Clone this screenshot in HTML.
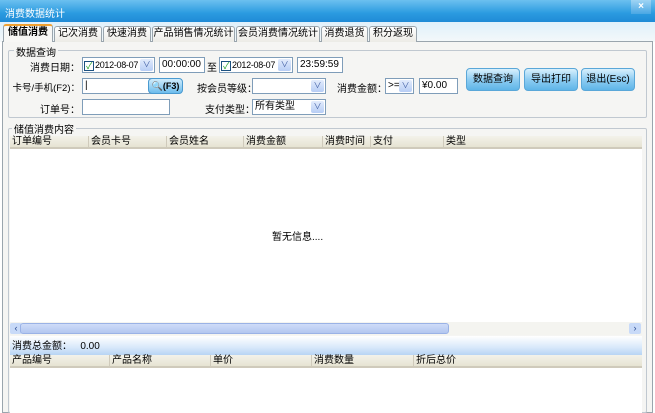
<!DOCTYPE html>
<html><head><meta charset="utf-8"><style>
*{box-sizing:border-box;margin:0;padding:0;white-space:nowrap}
body{width:655px;height:413px;overflow:hidden;background:#fff;font:10px "Liberation Sans","Noto Sans CJK SC",sans-serif;color:#000;position:relative}
.a{position:absolute}
.title{left:0;top:0;width:655px;height:22px;background:linear-gradient(#6cc0f0,#2b9be0 60%,#1f8ad6);color:#fff;padding:5px 5px;font-size:10px}
.x{right:4px;top:0;width:20px;height:14px;background:linear-gradient(#9fd4f4,#4aa7e4);color:#fff;font-weight:bold;text-align:center;font-size:10px;line-height:14px}
.tabbar{left:0;top:22px;width:655px;height:20px;background:linear-gradient(#dff0fb,#f4f8fa)}
.tab{top:26px;height:16px;border:1px solid #9aa5ad;border-bottom:none;border-radius:3px 3px 0 0;background:linear-gradient(#fff,#ecebe6);text-align:center;line-height:14px;font-size:10px;overflow:hidden}
.tab.on{top:24px;height:18px;background:#f7f7f5;font-weight:bold;border-top:2px solid #f0a030}
.panel{left:2px;top:41px;width:651px;height:372px;background:#f5f5f3;border:1px solid #9aa5ad}
.grp{border:1px solid #c0c8d0;border-radius:2px}
.gl{background:#f5f5f3;padding:0 2px;font-size:10px}
.in{background:#fff;border:1px solid #7f9db9;height:16px;font-size:10px;line-height:14px;padding-left:2px;overflow:hidden}
.dd{position:absolute;right:1px;top:1px;width:13px;height:12px;background:linear-gradient(#e3ecfc,#b7cdf5);border-radius:2px;color:#3c5aa0;font-size:8px;text-align:center;line-height:12px}
.cb{display:inline-block;width:10px;height:10px;border:1px solid #1c5180;background:#fff;color:#21a121;font-size:9px;line-height:8px;text-align:center;vertical-align:-1px;margin-right:1px}
.lb{font-size:10px;text-align:right}
.btn{top:68px;height:23px;width:54px;border:1px solid #5aa7d8;border-radius:4px;background:linear-gradient(#d8f0fd,#8fcdf2 50%,#5fb5e8);text-align:center;line-height:21px;font-size:10px}
.hdr{height:13px;background:linear-gradient(#f3f2ea,#e6e3d2);border-bottom:2px solid #cfcabb}
.hdr span{position:absolute;top:0;font-size:10px;line-height:12px;padding-left:2px;border-left:1px solid #cfcabb}
</style></head><body>
<div class="a title">消费数据统计</div>
<div class="a x">×</div>
<div class="a tabbar"></div>
<div class="a panel"></div>
<div class="a tab on" style="left:3px;width:50px">储值消费</div>
<div class="a tab" style="left:54px;width:48px">记次消费</div>
<div class="a tab" style="left:103px;width:48px">快速消费</div>
<div class="a tab" style="left:152px;width:83px">产品销售情况统计</div>
<div class="a tab" style="left:236px;width:84px">会员消费情况统计</div>
<div class="a tab" style="left:321px;width:47px">消费退货</div>
<div class="a tab" style="left:369px;width:48px">积分返现</div>

<div class="a grp" style="left:8px;top:50px;width:639px;height:68px"></div>
<div class="a gl" style="left:14px;top:44px">数据查询</div>
<div class="a lb" style="left:10px;top:59px;width:70px">消费日期：</div>
<div class="a in" style="left:82px;top:57px;width:73px;font-size:9px;letter-spacing:-0.3px;padding-left:1px"><span class="cb">✓</span>2012-08-07<span class="dd">∨</span></div>
<div class="a in" style="left:159px;top:57px;width:46px">00:00:00</div>
<div class="a" style="left:207px;top:59px">至</div>
<div class="a in" style="left:219px;top:57px;width:74px;font-size:9px;letter-spacing:-0.3px;padding-left:1px"><span class="cb">✓</span>2012-08-07<span class="dd">∨</span></div>
<div class="a in" style="left:297px;top:57px;width:46px">23:59:59</div>
<div class="a lb" style="left:4px;top:80px;width:76px;font-size:9.5px">卡号/手机(F2)：</div>
<div class="a in" style="left:82px;top:78px;width:80px">|</div>
<div class="a" style="left:148px;top:78px;width:35px;height:16px;border-radius:4px;border:1px solid #4a9ad0;background:linear-gradient(#d0ecfc,#6cbcec);font-size:9px;font-weight:bold;text-align:center;line-height:14px">🔍(F3)</div>
<div class="a" style="left:197px;top:80px">按会员等级：</div>
<div class="a in" style="left:252px;top:78px;width:74px"><span class="dd">∨</span></div>
<div class="a" style="left:337px;top:80px">消费金额：</div>
<div class="a in" style="left:385px;top:78px;width:29px">&gt;=<span class="dd">∨</span></div>
<div class="a in" style="left:419px;top:78px;width:39px">¥0.00</div>
<div class="a lb" style="left:10px;top:101px;width:70px">订单号：</div>
<div class="a in" style="left:82px;top:99px;width:88px"></div>
<div class="a" style="left:205px;top:101px">支付类型：</div>
<div class="a in" style="left:252px;top:99px;width:74px">所有类型<span class="dd">∨</span></div>
<div class="a btn" style="left:466px">数据查询</div>
<div class="a btn" style="left:524px">导出打印</div>
<div class="a btn" style="left:581px">退出(Esc)</div>

<div class="a grp" style="left:8px;top:128px;width:639px;height:285px"></div>
<div class="a gl" style="left:12px;top:121px">储值消费内容</div>
<div class="a" style="left:10px;top:136px;width:632px;height:186px;background:#fff"></div>
<div class="a hdr" style="left:10px;top:136px;width:632px">
<span style="left:0;border:none">订单编号</span><span style="left:78px">会员卡号</span><span style="left:156px">会员姓名</span><span style="left:233px">消费金额</span><span style="left:312px">消费时间</span><span style="left:360px">支付</span><span style="left:433px">类型</span></div>
<div class="a" style="left:272px;top:228px;font-size:10px">暂无信息....</div>
<div class="a" style="left:10px;top:322px;width:632px;height:13px;background:#f4f4f0"></div>
<div class="a" style="left:10px;top:323px;width:12px;height:11px;background:#c8daf8;border-radius:2px;font-size:9px;text-align:center;line-height:11px;color:#2a4a90">‹</div>
<div class="a" style="left:20px;top:323px;width:429px;height:11px;background:linear-gradient(#cfdcf8,#b2c6f0);border:1px solid #9ab2e6;border-radius:3px"></div>
<div class="a" style="left:629px;top:323px;width:12px;height:11px;background:#c8daf8;border-radius:2px;font-size:9px;text-align:center;line-height:11px;color:#2a4a90">›</div>
<div class="a" style="left:10px;top:336px;width:632px;height:19px;background:linear-gradient(#fff,#d8e8fa 60%,#b8d4f4);font-size:10px;line-height:22px;padding-left:2px">消费总金额：&nbsp;&nbsp;&nbsp;0.00</div>
<div class="a" style="left:10px;top:355px;width:632px;height:58px;background:#fff"></div>
<div class="a hdr" style="left:10px;top:355px;width:632px">
<span style="left:0;border:none">产品编号</span><span style="left:99px">产品名称</span><span style="left:200px">单价</span><span style="left:301px">消费数量</span><span style="left:403px">折后总价</span></div>
</body></html>
